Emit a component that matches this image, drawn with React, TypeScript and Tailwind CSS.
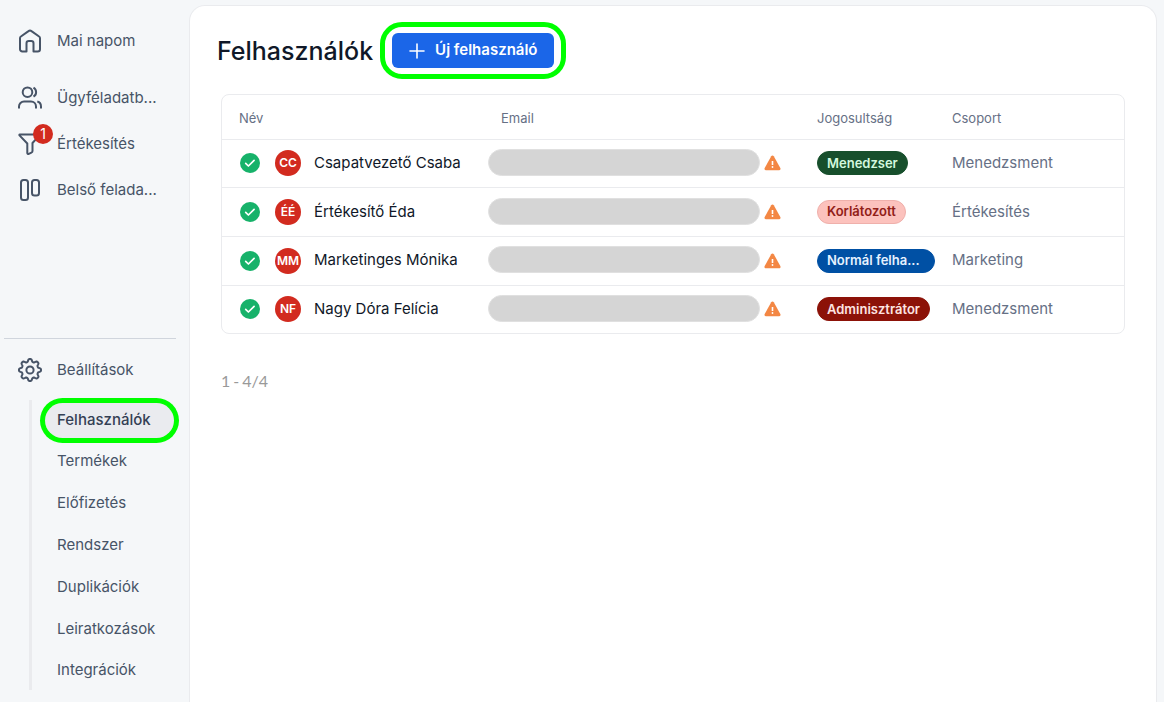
import React from "react";

type IconProps = { className?: string };

const stroke = {
  fill: "none",
  stroke: "currentColor",
  strokeWidth: 2,
  strokeLinecap: "round",
  strokeLinejoin: "round",
} as const;

function HomeIcon({ className }: IconProps) {
  return (
    <svg viewBox="0 0 26 26" className={className} aria-hidden="true" {...stroke}>
      <path d="M9.500 23.500v-8.200a2.300 2.300 0 0 1 2.300-2.300h2.400a2.300 2.300 0 0 1 2.300 2.300v8.200h4.200a2.300 2.300 0 0 0 2.300-2.300V10.200c0-.7-.3-1.300-.9-1.700l-7.600-5.400a2.500 2.500 0 0 0-3 0L3.900 8.500c-.6.400-.9 1-.9 1.700v11a2.300 2.300 0 0 0 2.300 2.300Z" />
    </svg>
  );
}

function UsersIcon({ className }: IconProps) {
  return (
    <svg viewBox="0 0 26 26" className={className} aria-hidden="true" {...stroke} strokeLinecap="butt">
      <circle cx="10.500" cy="7.200" r="4.800" />
      <path d="M2 23.500v-2a5 5 0 0 1 5-5h7a5 5 0 0 1 5 5v2" />
      <path d="M16.500 2.700a5.200 5.200 0 0 1 0 9" />
      <path d="M20.300 16.500c2.300.6 3.700 2.500 3.700 5v2" />
    </svg>
  );
}

function FunnelIcon({ className }: IconProps) {
  return (
    <svg viewBox="0 0 26 26" className={className} aria-hidden="true" {...stroke}>
      <path d="M2.800 3.500h19.400c.5 0 .6.500.3.900L15.500 12v8c0 .8-.4 1.400-1.100 1.700l-2.600 1.200c-.8.400-1.500 0-1.500-.8V12.500L2.500 4.400c-.3-.4-.2-.9.300-.9Z" />
    </svg>
  );
}

function BoardIcon({ className }: IconProps) {
  return (
    <svg viewBox="0 0 26 26" className={className} aria-hidden="true" {...stroke}>
      <rect x="4" y="3" width="7" height="20" rx="2.500" />
      <rect x="15" y="3" width="7" height="15.500" rx="2.500" />
    </svg>
  );
}

function GearIcon({ className }: IconProps) {
  const points: string[] = [];
  for (let i = 0; i < 96; i++) {
    const a = (i / 96) * Math.PI * 2;
    const wave = Math.cos(a * 8);
    const r = 9.7 + 1.4 * Math.tanh(wave * 1.8);
    points.push(`${(13 + r * Math.sin(a)).toFixed(2)} ${(13 - r * Math.cos(a)).toFixed(2)}`);
  }
  return (
    <svg viewBox="0 0 26 26" className={className} aria-hidden="true" {...stroke}>
      <path d={`M${points.join("L")}Z`} />
      <circle cx="13" cy="13" r="3.600" />
    </svg>
  );
}

function CheckBadge() {
  return (
    <svg viewBox="0 0 20 20" className="size-5 shrink-0" role="img" aria-label="Aktív">
      <circle cx="10" cy="10" r="10" fill="#17b26a" />
      <path d="m5.700 10.400 2.700 2.600 5.700-5.700" fill="none" stroke="white" strokeWidth="1.700" strokeLinecap="round" strokeLinejoin="round" />
    </svg>
  );
}

function WarningIcon() {
  return (
    <svg viewBox="0 0 17 16" className="h-4 w-[17px] shrink-0" role="img" aria-label="Figyelmeztetés">
      <path d="M7.200 1.300a1.500 1.500 0 0 1 2.600 0l6.500 11.800c.6 1.100 0 2.100-1.200 2.100H1.900C.7 15.200.1 14.200.7 13.100Z" fill="#f38744" />
      <path d="M8.500 6v4" stroke="white" strokeWidth="1.600" />
      <circle cx="8.500" cy="12" r="0.900" fill="white" />
    </svg>
  );
}

const mainItems = [
  { label: "Ügyféladatb...", icon: UsersIcon },
  { label: "Értékesítés", icon: FunnelIcon, badge: 1 },
  { label: "Belső felada...", icon: BoardIcon },
];

const subItems = ["Felhasználók", "Termékek", "Előfizetés", "Rendszer", "Duplikációk", "Leiratkozások", "Integrációk"];

const users = [
  { initials: "CC", name: "Csapatvezető Csaba", role: "Menedzser", tone: "border-[#174f2c] bg-[#174f2c] text-[#d3f8df]", group: "Menedzsment" },
  { initials: "ÉÉ", name: "Értékesítő Éda", role: "Korlátozott", tone: "border-[#efb0ab] bg-[#fcc2bd] text-[#912018]", group: "Értékesítés" },
  { initials: "MM", name: "Marketinges Mónika", role: "Normál felha...", tone: "border-[#0050a4] bg-[#0050a4] text-[#e6f2ff] pr-[14px]", group: "Marketing" },
  { initials: "NF", name: "Nagy Dóra Felícia", role: "Adminisztrátor", tone: "border-[#8c1208] bg-[#8c1208] text-[#fee4e2]", group: "Menedzsment" },
];

function NavLink({ label, icon: Icon, badge }: { label: string; icon: React.FC<IconProps>; badge?: number }) {
  return (
    <a href="#" className="flex h-[46px] items-center gap-[14px] pl-[17px] whitespace-nowrap">
      <span className="relative">
        <Icon className="size-[26px]" />
        {badge !== undefined && (
          <span className="absolute -top-[7px] left-4 flex size-5 items-center justify-center rounded-full bg-[#d22b1f] text-sm leading-5 text-white">
            {badge}
          </span>
        )}
      </span>
      {label}
    </a>
  );
}

function Sidebar() {
  return (
    <nav aria-label="Főmenü" className="w-[189px] shrink-0 pt-[18px] text-[15px] text-[#475467]">
      <NavLink label="Mai napom" icon={HomeIcon} />
      <div className="mt-[11px] mb-[125px]">
        {mainItems.map((item) => (
          <NavLink key={item.label} {...item} />
        ))}
      </div>
      <hr className="mr-[13px] ml-1 border-[#d0d5dd]" />
      <div className="mt-2">
        <NavLink label="Beállítások" icon={GearIcon} />
      </div>
      <ul className="mt-[7px] ml-[29px] border-l-3 border-[#eaebee] pl-[13px]">
        {subItems.map((label, index) => (
          <li key={label} className="flex h-[42px] items-center first:h-10 last:h-10">
            <a
              href="#"
              aria-current={index === 0 ? "page" : undefined}
              className={
                index === 0
                  ? "flex h-[35px] w-[129px] items-center rounded-[18px] bg-[#eaebef] px-3 font-medium text-[#344054] ring-5 ring-[#00ff00]"
                  : "flex h-[35px] items-center px-3"
              }
            >
              {label}
            </a>
          </li>
        ))}
      </ul>
    </nav>
  );
}

export default function App() {
  return (
    <div className="flex min-h-screen bg-[#f5f7f9] pr-[7px] font-['Inter',sans-serif]">
      <Sidebar />
      <main className="mt-[5px] min-w-0 flex-1 rounded-t-2xl border border-b-0 border-[#eaebee] bg-white pt-4 pr-[31px] pl-[27px]">
        <header className="flex items-center gap-[7px]">
          <h1 className="text-[25px] leading-8 font-medium text-[#101828]">Felhasználók</h1>
          <div className="rounded-[22px] border-5 border-[#00ff00] px-[7px] py-[6px]">
            <button type="button" className="flex h-[35px] items-center gap-[9px] rounded-md bg-[#1b66e8] px-4 text-[15px] font-semibold text-white">
              <svg viewBox="0 0 18 18" className="size-[18px]" aria-hidden="true" {...stroke} strokeWidth={1.6}>
                <path d="M9 2v14M2 9h14" />
              </svg>
              Új felhasználó
            </button>
          </div>
        </header>

        <div className="mt-[15px] ml-1 overflow-hidden rounded-lg border border-[#eaebee]">
          <table className="h-[238px] w-full table-fixed border-collapse text-left whitespace-nowrap">
            <thead>
              <tr className="h-11 text-[13px] text-[#667085]">
                <th scope="col" className="w-[262px] pt-[3px] pl-[17px] font-normal">Név</th>
                <th scope="col" className="w-[316px] pt-[3px] pl-[17px] font-normal">Email</th>
                <th scope="col" className="w-[135px] pt-[3px] pl-[17px] font-normal">Jogosultság</th>
                <th scope="col" className="pt-[3px] pl-[17px] font-normal">Csoport</th>
              </tr>
            </thead>
            <tbody>
              {users.map((user) => (
                <tr key={user.initials} className="border-t border-[#eaebee]">
                  <td className="pl-[18px]">
                    <div className="flex items-center text-[15px] text-[#101828]">
                      <CheckBadge />
                      <span className="mr-[13px] ml-[15px] flex size-[26px] shrink-0 items-center justify-center rounded-full bg-[#d22b1f] text-xs font-semibold text-white">
                        {user.initials}
                      </span>
                      {user.name}
                    </div>
                  </td>
                  <td className="pl-1">
                    <div className="flex items-center gap-1">
                      <span className="mb-[2px] h-[27px] w-[272px] rounded-full border border-[#e0e0e0] bg-[#d5d5d5]" />
                      <WarningIcon />
                    </div>
                  </td>
                  <td className="pl-[17px]">
                    <span className={`flex h-6 w-fit items-center rounded-full border px-[9px] text-[13px] font-semibold ${user.tone}`}>
                      {user.role}
                    </span>
                  </td>
                  <td className="pl-[17px] text-[15px] text-[#667085]">{user.group}</td>
                </tr>
              ))}
            </tbody>
          </table>
        </div>

        <p className="mt-[35px] ml-1 flex gap-[3px] font-['Lato',sans-serif] text-base text-[#999999]">
          <span>1</span>
          <span>-</span>
          <span>4/4</span>
        </p>
      </main>
    </div>
  );
}
